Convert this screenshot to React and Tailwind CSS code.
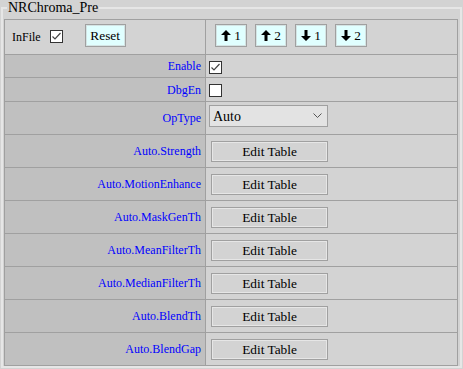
import React from 'react';

const tables = [
  'Auto.Strength',
  'Auto.MotionEnhance',
  'Auto.MaskGenTh',
  'Auto.MeanFilterTh',
  'Auto.MedianFilterTh',
  'Auto.BlendTh',
  'Auto.BlendGap',
];

function Check({ checked }) {
  return (
    <span className="inline-flex w-[13px] h-[13px] border border-[#333] bg-white items-center justify-center">
      {checked && (
        <svg width="11" height="11" viewBox="0 0 11 11">
          <polyline points="1.5,5.5 4,8 9.5,2" fill="none" stroke="#444" strokeWidth="1.2" />
        </svg>
      )}
    </span>
  );
}

function Arrow({ down }) {
  return (
    <svg width="10" height="11" viewBox="0 0 10 11" className={down ? 'rotate-180' : ''}>
      <path d="M5 0 L10 5 L6.5 5 L6.5 11 L3.5 11 L3.5 5 L0 5 Z" fill="#000" />
    </svg>
  );
}

function Label({ children }) {
  return (
    <div className="w-[200px] shrink-0 bg-[#c0c0c0] flex items-center justify-end pr-[4px] text-[12px] text-[#0000ff]">
      {children}
    </div>
  );
}

export default function App() {
  return (
    <div className="w-[463px] h-[369px] overflow-hidden bg-[#d3d3d3] font-['Liberation_Serif',serif] text-black">
      <fieldset className="mx-[1px] border-2 border-[#e6e6e6] pl-[1px] pr-[2px]">
        <legend className="ml-[3px] px-[1px] text-[14px] leading-[16px]">NRChroma_Pre</legend>
        <div className="mt-[3px] border border-[#a0a0a0]">
          {/* header */}
          <div className="flex h-[34px]">
            <div className="w-[200px] shrink-0 flex items-start pt-[4px] pl-[7px]">
              <div className="flex items-center h-[23px] text-[12px]">
                <span className="pt-[2px]">InFile</span>
                <span className="ml-[9px] flex pt-[2px]"><Check checked /></span>
                <button className="ml-[22px] h-[23px] w-[41px] bg-[#e0ffff] border border-[#a0a0a0] shadow-[inset_0_0_0_1px_#d4e4e4] text-[13.33px]">
                  Reset
                </button>
              </div>
            </div>
            <div className="flex-1 border-l border-[#a0a0a0] flex items-start pt-[4px] pl-[9px] gap-[8px]">
              {[['1', false], ['2', false], ['1', true], ['2', true]].map(([n, d], i) => (
                <button
                  key={i}
                  className="h-[23px] w-[32px] bg-[#e0ffff] border border-[#a0a0a0] shadow-[inset_0_0_0_1px_#d4e4e4] flex items-center justify-center gap-[3px] text-[13.33px]"
                >
                  <Arrow down={d} />
                  <span>{n}</span>
                </button>
              ))}
            </div>
          </div>

          <div className="flex h-[23px] border-t border-[#a0a0a0]">
            <Label>Enable</Label>
            <div className="flex-1 border-l border-[#a0a0a0] pl-[3px] pt-[1px]">
              <Check checked />
            </div>
          </div>

          <div className="flex h-[24px] border-t border-[#a0a0a0]">
            <Label>DbgEn</Label>
            <div className="flex-1 border-l border-[#a0a0a0] pl-[3px] pt-[2px]">
              <Check />
            </div>
          </div>

          <div className="flex h-[33px] border-t border-[#a0a0a0]">
            <Label>OpType</Label>
            <div className="flex-1 border-l border-[#a0a0a0] pl-[3px] pt-[3px]">
              <div className="w-[119px] h-[22px] bg-[#e3e3e3] border border-[#a0a0a0] flex items-center justify-between pl-[3px] pr-[5px] text-[14px]">
                <span>Auto</span>
                <svg width="9" height="6" viewBox="0 0 9 6">
                  <polyline points="0.5,0.5 4.5,4.5 8.5,0.5" fill="none" stroke="#555" strokeWidth="1" />
                </svg>
              </div>
            </div>
          </div>

          {tables.map((t) => (
            <div key={t} className="flex h-[33px] border-t border-[#a0a0a0]">
              <Label>{t}</Label>
              <div className="flex-1 border-l border-[#a0a0a0] pl-[5px] pt-[4px]">
                <button className="w-[117px] h-[21px] bg-[#d3d3d3] border border-[#a0a0a0] shadow-[inset_0_0_0_1px_#e6e6e6] text-[13.33px] leading-none">
                  Edit Table
                </button>
              </div>
            </div>
          ))}
        </div>
      </fieldset>
    </div>
  );
}
